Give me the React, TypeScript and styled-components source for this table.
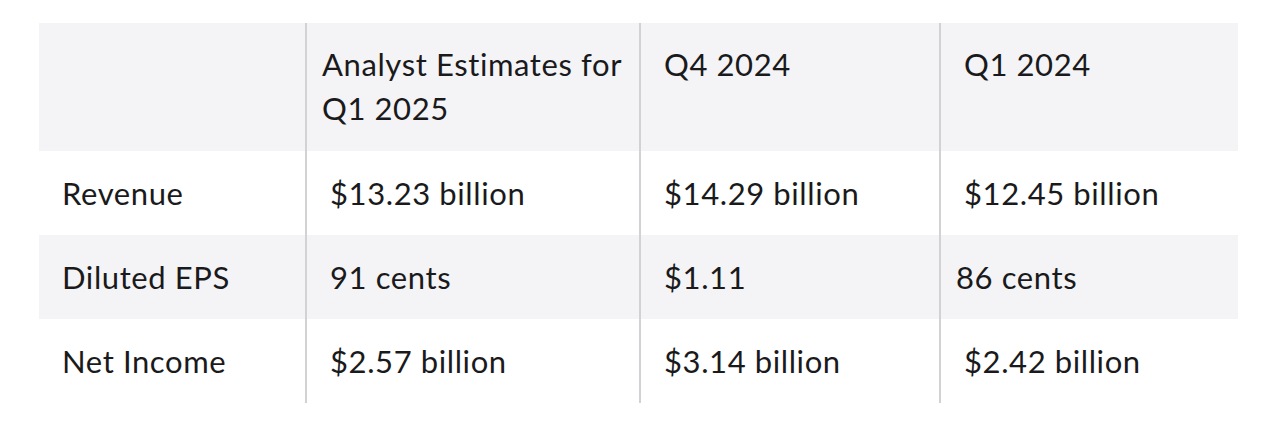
import styled, { createGlobalStyle } from 'styled-components'

const GlobalStyle = createGlobalStyle`
    body {
        margin: 0;
        background: #ffffff;
        font-family: "Lato", "Open Sans", sans-serif;
        color: #1a1a1c;
    }
`

const Wrapper = styled.div`
    padding: 23px 0 0 39px;
`

const Table = styled.table`
    width: 1199px;
    border-collapse: collapse;
    table-layout: fixed;
    font-size: 31px;
    letter-spacing: 0.6px;
    line-height: 44px;
`

const HeadRow = styled.tr`
    background: #f4f4f6;
    height: 128px;
`

const Row = styled.tr<{ $shaded?: boolean }>`
    background: ${props => (props.$shaded ? '#f4f4f6' : '#ffffff')};
    height: 84px;
`

const HeadCell = styled.th<{ $pad?: number; $divider?: boolean }>`
    font-weight: normal;
    text-align: left;
    vertical-align: top;
    padding: 19px 8px 0 ${props => props.$pad ?? 23}px;
    border-left: ${props => (props.$divider ? '2px solid #d2d2d4' : 'none')};
`

const Cell = styled.td<{ $pad?: number; $divider?: boolean }>`
    vertical-align: middle;
    padding: 0 8px 0 ${props => props.$pad ?? 23}px;
    border-left: ${props => (props.$divider ? '2px solid #d2d2d4' : 'none')};
`

const rows = [
    { label: 'Revenue', values: ['$13.23 billion', '$14.29 billion', '$12.45 billion'], pads: [23, 23, 23] },
    { label: 'Diluted EPS', values: ['91 cents', '$1.11', '86 cents'], pads: [23, 23, 15] },
    { label: 'Net Income', values: ['$2.57 billion', '$3.14 billion', '$2.42 billion'], pads: [23, 23, 23] },
]

const App = () => {
    return <>
        <GlobalStyle />
        <Wrapper>
            <Table>
                <colgroup>
                    <col style={{ width: 267 }} />
                    <col style={{ width: 334 }} />
                    <col style={{ width: 300 }} />
                    <col style={{ width: 298 }} />
                </colgroup>
                <thead>
                    <HeadRow>
                        <HeadCell $pad={23}></HeadCell>
                        <HeadCell $divider $pad={15}>Analyst Estimates for Q1 2025</HeadCell>
                        <HeadCell $divider>Q4 2024</HeadCell>
                        <HeadCell $divider>Q1 2024</HeadCell>
                    </HeadRow>
                </thead>
                <tbody>
                    {rows.map((row, i) => (
                        <Row key={row.label} $shaded={i === 1}>
                            <Cell $pad={23}>{row.label}</Cell>
                            {row.values.map((v, j) => (
                                <Cell key={j} $divider $pad={row.pads[j]}>{v}</Cell>
                            ))}
                        </Row>
                    ))}
                </tbody>
            </Table>
        </Wrapper>
    </>
}

export default App
